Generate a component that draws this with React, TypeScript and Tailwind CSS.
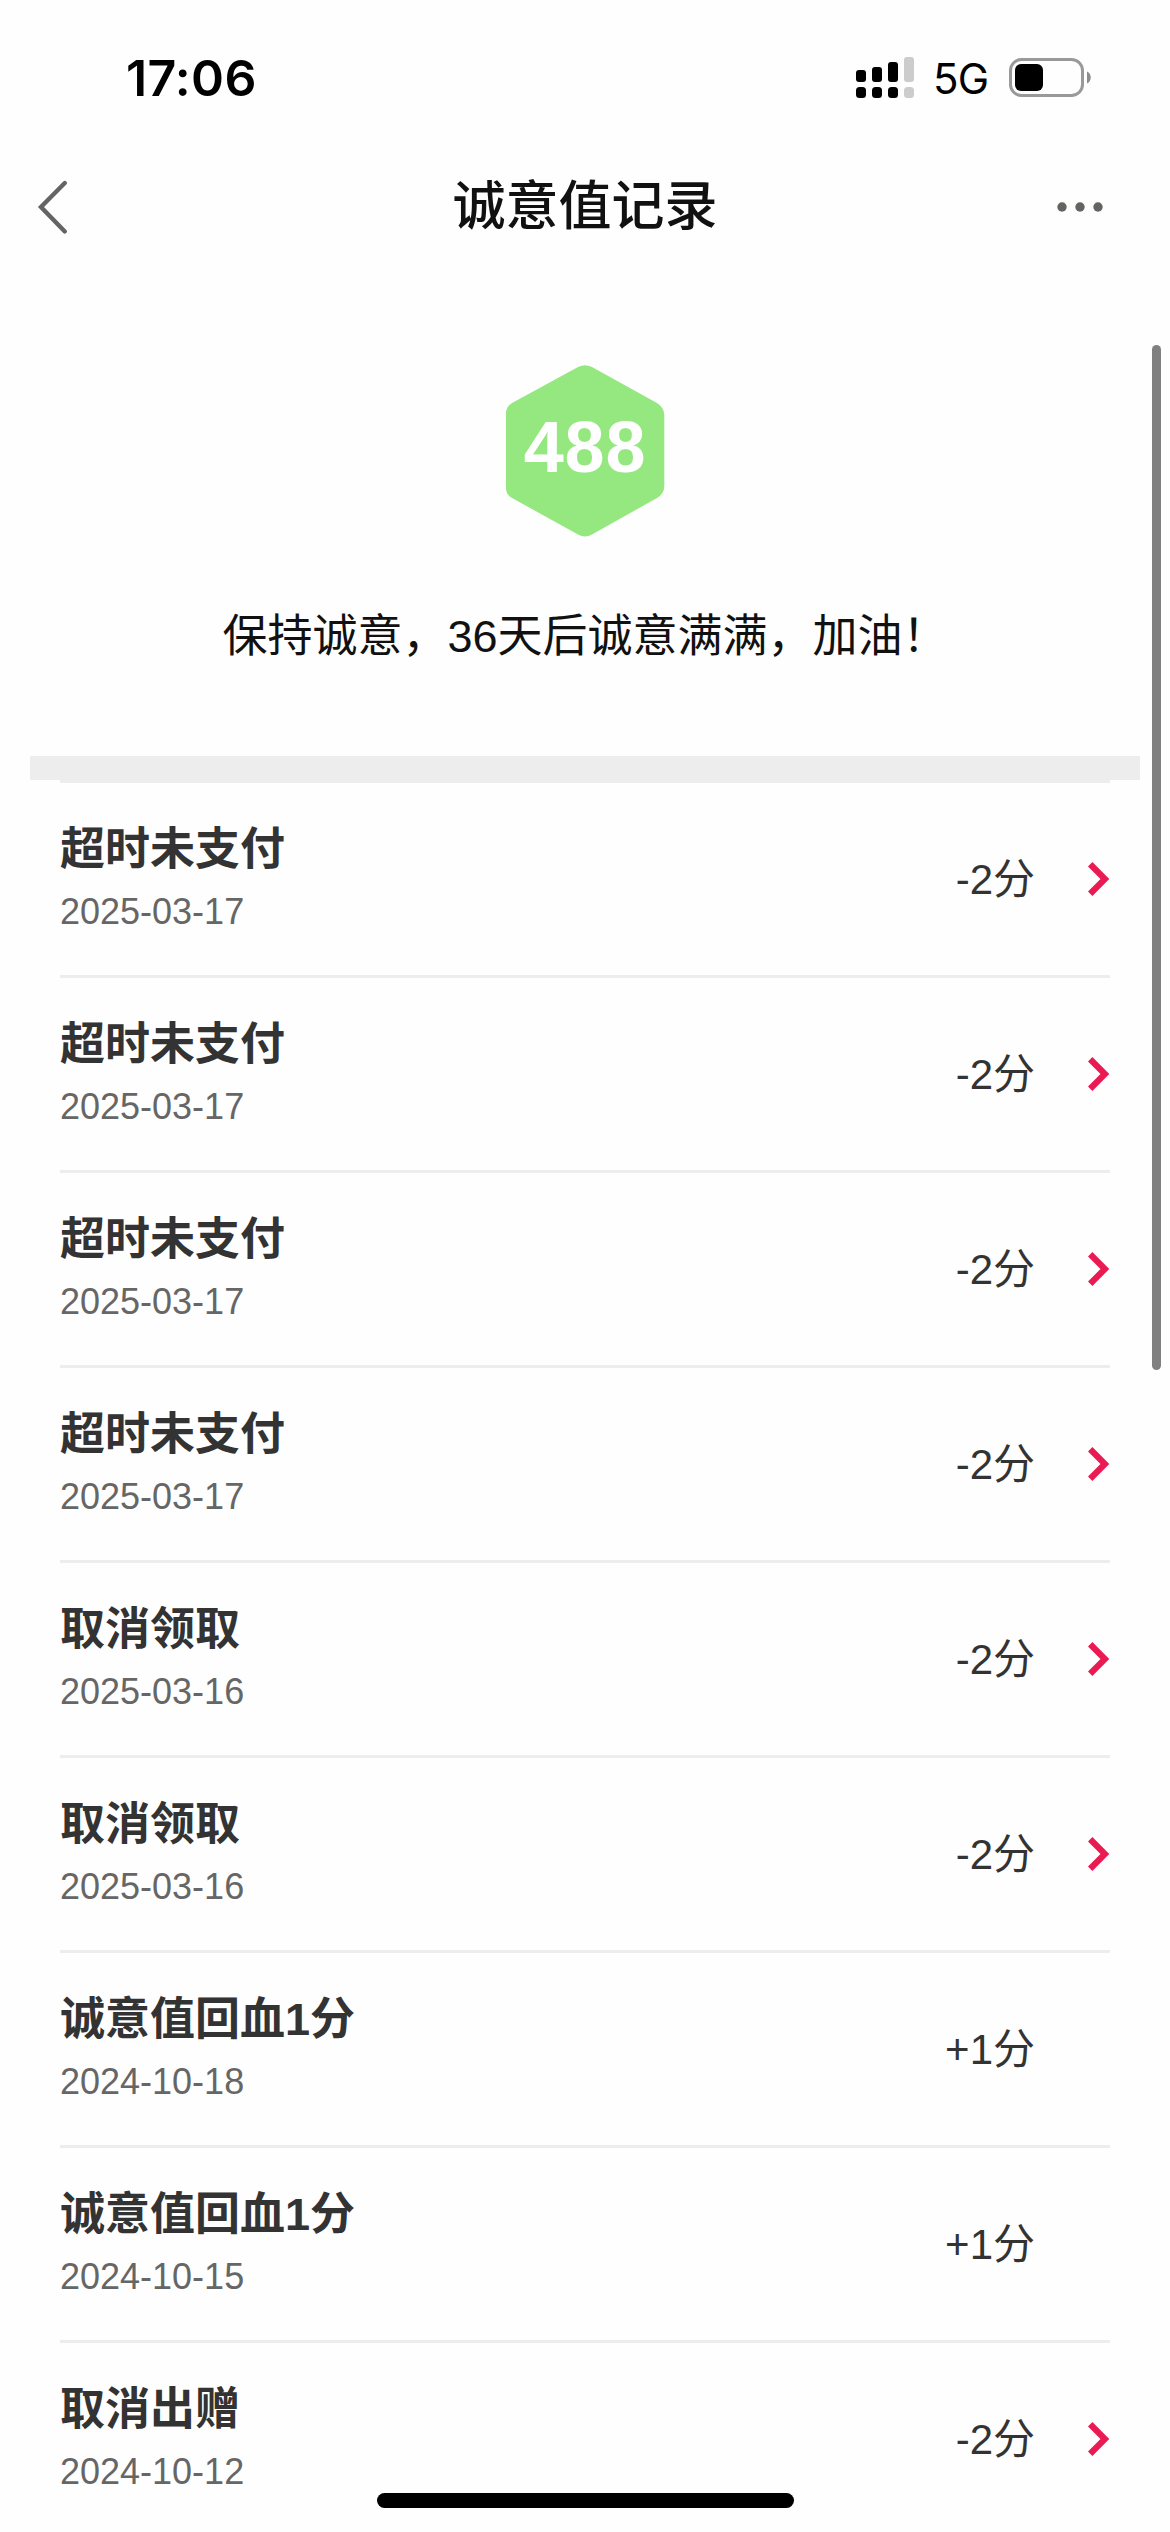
type LogRecord = { title: string; date: string; score: string; link: boolean };

const records: LogRecord[] = [
  { title: '超时未支付', date: '2025-03-17', score: '-2分', link: true },
  { title: '超时未支付', date: '2025-03-17', score: '-2分', link: true },
  { title: '超时未支付', date: '2025-03-17', score: '-2分', link: true },
  { title: '超时未支付', date: '2025-03-17', score: '-2分', link: true },
  { title: '取消领取', date: '2025-03-16', score: '-2分', link: true },
  { title: '取消领取', date: '2025-03-16', score: '-2分', link: true },
  { title: '诚意值回血1分', date: '2024-10-18', score: '+1分', link: false },
  { title: '诚意值回血1分', date: '2024-10-15', score: '+1分', link: false },
  { title: '取消出赠', date: '2024-10-12', score: '-2分', link: true },
];

function StatusBar() {
  return (
    <div className="flex h-[156px] items-start justify-between pl-[126px] pr-[78px] font-['Inter',sans-serif] text-black">
      <span className="mt-[48px] text-[50px] leading-[60px] font-semibold tracking-[0.3px]">17:06</span>
      <div className="mt-[48px] flex h-[60px] items-center">
        <svg width="60" height="60" viewBox="0 0 60 60" className="mr-[18px]">
          <rect x="1" y="22" width="10" height="12" rx="3" />
          <rect x="17" y="19" width="10" height="15" rx="3" />
          <rect x="33" y="14" width="10" height="20" rx="3" />
          <rect x="49" y="9" width="10" height="25" rx="3" fill="#cccccc" />
          <rect x="1" y="39" width="10" height="11" rx="3.5" />
          <rect x="17" y="39" width="10" height="11" rx="3.5" />
          <rect x="33" y="39" width="10" height="11" rx="3.5" />
          <rect x="49" y="39" width="10" height="11" rx="3.5" fill="#cccccc" />
        </svg>
        <span className="w-[60px] pt-px text-[42px] leading-[60px] font-normal tracking-[-0.8px]">5G</span>
        <svg width="84" height="60" viewBox="0 0 84 60" className="ml-[15px]">
          <rect x="2.5" y="11.5" width="72" height="36" rx="11" fill="none" stroke="#999999" strokeWidth="3" />
          <rect x="7" y="16" width="28" height="27" rx="6" />
          <path d="M79 23.5c5 2 5 10 0 12z" fill="#8c8c8c" />
        </svg>
      </div>
    </div>
  );
}

function NavBar() {
  return (
    <div className="flex h-[102px] items-center justify-between px-[36px]">
      <svg width="80" height="60" viewBox="0 0 80 60" fill="none" stroke="#646464" strokeWidth="4.4">
        <path d="M28.8 6 5 30l23.8 24.500" strokeLinecap="round" />
      </svg>
      <h1 className="text-[53px] leading-[80px] font-medium text-[#111111]">诚意值记录</h1>
      <svg width="80" height="60" viewBox="0 0 80 60" fill="#63645f">
        <circle cx="8" cy="30" r="4.7" />
        <circle cx="26" cy="30" r="4.7" />
        <circle cx="44" cy="30" r="4.7" />
      </svg>
    </div>
  );
}

function ScoreBadge() {
  return (
    <div className="grid h-[174px] w-[160px] place-items-center">
      <svg width="160" height="174" viewBox="0 0 160 174" className="col-start-1 row-start-1">
        <path
          d="M73.500 2.800Q80 -.5 86.500 2.800L152 39Q159.300 43.500 159.300 51V122Q159.300 129.500 152 134L87 170.500Q80 174.500 73 170.500L7 134Q1 130.500 1 124V49Q1 43 7 39Z"
          fill="#95e880"
        />
      </svg>
      <span className="col-start-1 row-start-1 mb-[8px] text-[72px] leading-[80px] font-bold tracking-[0.8px] text-white">488</span>
    </div>
  );
}

function RecordRow({ title, date, score, link }: LogRecord) {
  return (
    <li className="flex h-[195px] items-center border-t-[3px] border-[#ededed]">
      <div className="flex h-full flex-1 flex-col gap-[6px] pt-[35px]">
        <p className="text-[45px] leading-[63px] font-bold text-[#333333]">{title}</p>
        <p className="text-[36px] leading-[50px] text-[#666666]">{date}</p>
      </div>
      <span className="pt-[2px] text-[42px] leading-[60px] text-[#333333]">{score}</span>
      <div className="flex w-[75px] justify-end">
        {link && (
          <svg width="24" height="40" viewBox="0 0 24 40" fill="none" stroke="#ea1a53" strokeWidth="6.2">
            <path d="M4.200 5.300 18.900 20 4.200 34.700" />
          </svg>
        )}
      </div>
    </li>
  );
}

export default function App() {
  return (
    <div className="relative h-[2532px] w-[1170px] overflow-hidden bg-[#fefefe] font-['Liberation_Sans','Noto_Sans_CJK_SC',sans-serif]">
      <StatusBar />
      <NavBar />
      <section className="flex h-[498px] flex-col items-center pt-[106px]">
        <ScoreBadge />
        <p className="mt-[67px] text-[45px] leading-[63px] text-[#111111]">保持诚意，36天后诚意满满，加油！</p>
      </section>
      <div className="mx-[30px] h-[24px] bg-[#ededed]" />
      <ul className="mx-[60px]">
        {records.map((record, index) => (
          <RecordRow key={index} {...record} />
        ))}
      </ul>
      <div className="absolute top-[345px] right-[9px] h-[1025px] w-[9px] rounded-full bg-[#808080]" />
      <div className="absolute bottom-[24px] left-[377px] h-[15px] w-[417px] rounded-full bg-black" />
    </div>
  );
}
